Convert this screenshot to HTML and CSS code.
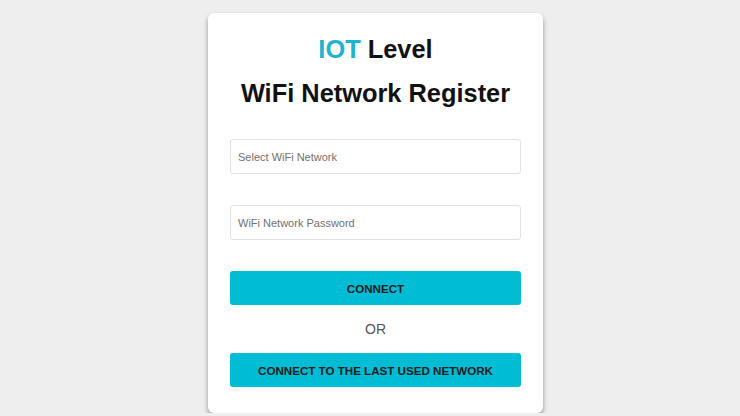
FILE: index.html
```html
<!DOCTYPE html>
<html lang="en">
<head>
    <meta charset="UTF-8">
    <meta name="viewport" content="width=device-width, initial-scale=1.0">
    <title>WiFi Network Register</title>
    <link rel="stylesheet" href="styles.css">
</head>
<body>
    <div class="page">
        <div class="card">
            <h1 class="brand"><span class="accent">IOT</span> Level</h1>
            <h2 class="title">WiFi Network Register</h2>

            <form class="wifi-form">
                <input type="text" class="field" placeholder="Select WiFi Network">
                <input type="password" class="field" placeholder="WiFi Network Password">
                <button type="button" class="btn">CONNECT</button>
                <p class="or">OR</p>
                <button type="button" class="btn">CONNECT TO THE LAST USED NETWORK</button>
            </form>
        </div>
    </div>
</body>
</html>
```

FILE: styles.css
```css
body {
    margin: 0;
    padding: 0;
    background-color: #eeeeee;
    font-family: "Liberation Sans", Arial, sans-serif;
}

.page {
    display: flex;
    justify-content: center;
    padding: 13px 0 0 11px;
}

.card {
    width: 291px;
    background-color: #fff;
    border-radius: 6px;
    padding: 21px 22px 26px;
    box-shadow: 0 3px 5px rgba(0, 0, 0, 0.38);
}

.brand,
.title {
    margin: 0;
    text-align: center;
    font-size: 25.4px;
    font-weight: bold;
    color: #111;
}

.brand {
    line-height: 30px;
}

.title {
    margin-top: 14px;
    line-height: 30px;
}

.accent {
    color: #1eb3cf;
}

.wifi-form {
    display: flex;
    flex-direction: column;
    margin-top: 31px;
}

.field {
    box-sizing: border-box;
    height: 35px;
    margin: 0 0 31px;
    padding: 0 7px;
    border: 1px solid #e2e2e2;
    border-radius: 3px;
    font-family: "Liberation Sans", Arial, sans-serif;
    font-size: 11px;
    color: #333;
}

.field::placeholder {
    color: #707070;
}

.btn {
    height: 34px;
    border: none;
    border-radius: 3px;
    background-color: #00bcd4;
    color: #1a1a1a;
    font-family: "Liberation Sans", Arial, sans-serif;
    font-size: 11.6px;
    font-weight: bold;
    cursor: pointer;
}

.or {
    margin: 0;
    height: 48px;
    line-height: 48px;
    text-align: center;
    font-size: 14px;
    color: #555;
}
```
